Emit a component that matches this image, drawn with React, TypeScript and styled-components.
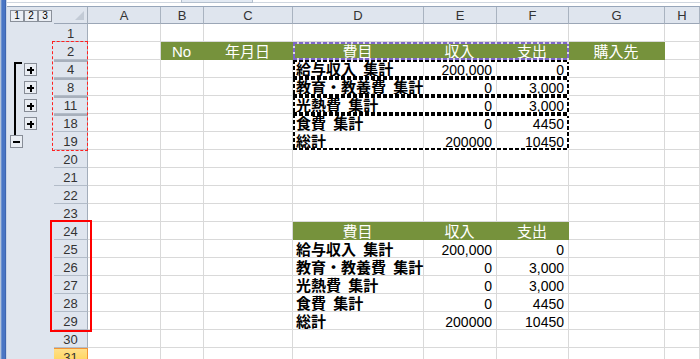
import React from 'react';
import styled, { createGlobalStyle } from 'styled-components';

const GlobalStyle = createGlobalStyle`
  html, body {
    margin: 0;
    padding: 0;
    background: #fff;
    overflow: hidden;
  }
  body {
    font-family: "Liberation Sans", "Noto Sans CJK JP", sans-serif;
  }
`;

const LETTERS = ['A', 'B', 'C', 'D', 'E', 'F', 'G', 'H'];
const colOf = (l: string) => 4 + LETTERS.indexOf(l);

type SheetRow = {
  n: number;
  hiddenAbove?: boolean;
  toggle?: 'plus' | 'minus';
  selected?: boolean;
  head?: Record<string, string>;
  data?: [string, string, string];
};

const firstHead = { B: 'No', C: '年月日', D: '費目', E: '収入', F: '支出', G: '購入先' };
const secondHead = { D: '費目', E: '収入', F: '支出' };

const totals: [string, string, string][] = [
  ['給与収入 集計', '200,000', '0'],
  ['教育・教養費 集計', '0', '3,000'],
  ['光熱費 集計', '0', '3,000'],
  ['食費 集計', '0', '4450'],
  ['総計', '200000', '10450'],
];

const rows: SheetRow[] = [
  { n: 1 },
  { n: 2, head: firstHead },
  { n: 4, hiddenAbove: true, toggle: 'plus', data: totals[0] },
  { n: 8, hiddenAbove: true, toggle: 'plus', data: totals[1] },
  { n: 11, hiddenAbove: true, toggle: 'plus', data: totals[2] },
  { n: 18, hiddenAbove: true, toggle: 'plus', data: totals[3] },
  { n: 19, toggle: 'minus', data: totals[4] },
  { n: 20 },
  { n: 21 },
  { n: 22 },
  { n: 23 },
  { n: 24, head: secondHead },
  { n: 25, data: totals[0] },
  { n: 26, data: totals[1] },
  { n: 27, data: totals[2] },
  { n: 28, data: totals[3] },
  { n: 29, data: totals[4] },
  { n: 30 },
  { n: 31, selected: true },
];

// grid row of a sheet row: strip + column header come first
const gr = (i: number) => i + 3;

const Sheet = styled.div`
  display: grid;
  grid-template-columns: 7px 47px 34px 73px 43px 89px 131px 73px 72px 96px 1fr;
  grid-template-rows: 7px 17px repeat(19, 18px);
  width: 700px;
  height: 359px;
  overflow: hidden;
  position: relative;
`;

const BlueStrip = styled.div`
  grid-column: 1;
  grid-row: 1 / -1;
  background: linear-gradient(
    to right,
    #b3c3da 0 1px,
    #6d92cf 1px 2px,
    #4a76c4 2px 5px,
    #3f66b0 5px 6px,
    #c9d5e6 6px
  );
`;

const TopStrip = styled.div`
  grid-column: 2 / -1;
  grid-row: 1;
  display: flex;
  background: linear-gradient(#fff 0 2px, #cfd6df 2px 3px, #fff 3px 6px, #97a6ba 6px);
`;

const NameTab = styled.div`
  margin-left: 174px;
  width: 70px;
  height: 2px;
  background: #e3eaf3;
  border: 1px solid #b3bfcd;
  border-top: none;
`;

const HeaderBase = styled.div`
  box-sizing: border-box;
  background: #dfe5ee;
  color: #333;
  font-size: 13px;
  display: flex;
  align-items: center;
  justify-content: center;
`;

const LevelCell = styled(HeaderBase)`
  grid-column: 2;
  grid-row: 2;
  justify-content: flex-start;
  padding-left: 3px;
`;

const LevelButton = styled.div`
  box-sizing: border-box;
  width: 14px;
  height: 12px;
  border: 1px solid #8a909a;
  background: #eaeef4;
  font-size: 10px;
  line-height: 10px;
  text-align: center;
  color: #000;
`;

const Corner = styled(HeaderBase)`
  grid-column: 3;
  grid-row: 2;
  position: relative;
  border-right: 1px solid #a3adba;
  border-bottom: 1px solid #9ba6b6;
  &::after {
    content: '';
    position: absolute;
    right: 3px;
    bottom: 3px;
    border-left: 9px solid transparent;
    border-bottom: 9px solid #c3cbd6;
  }
`;

const ColHeader = styled(HeaderBase)<{ $c: number }>`
  grid-column: ${p => p.$c};
  grid-row: 2;
  border-right: 1px solid #a9b3c0;
  border-bottom: 1px solid #9ba6b6;
  padding-top: 1px;
`;

const OutlineCell = styled.div<{ $r: number; $indent: number }>`
  grid-column: 2;
  grid-row: ${p => p.$r};
  background: #dfe5ee;
  display: flex;
  align-items: center;
  padding-left: ${p => p.$indent}px;
`;

const Toggle = styled.div<{ $plus: boolean }>`
  box-sizing: border-box;
  width: 13px;
  height: 13px;
  margin-top: ${p => (p.$plus ? 1 : 0)}px;
  border: 1px solid #878d97;
  background: #e9edf3;
  position: relative;
  &::before {
    content: '';
    position: absolute;
    left: 2px;
    top: 5px;
    width: 7px;
    height: 2px;
    background: #000;
  }
  &::after {
    content: '';
    display: ${p => (p.$plus ? 'block' : 'none')};
    position: absolute;
    left: 4.5px;
    top: 2.5px;
    width: 2px;
    height: 7px;
    background: #000;
  }
`;

const RowHeader = styled(HeaderBase)<{ $r: number; $hidden?: boolean; $selected?: boolean }>`
  grid-column: 3;
  grid-row: ${p => p.$r};
  border-right: 1px solid ${p => (p.$selected ? '#f29436' : '#a3adba')};
  border-bottom: 1px solid ${p => (p.$selected ? '#f29436' : '#b3bcc8')};
  border-top: ${p => (p.$selected ? '1px solid #f29436' : 'none')};
  background: ${p => (p.$selected ? 'linear-gradient(#ffe08a, #ffd24f)' : '#dfe5ee')};
  box-shadow: ${p => (p.$hidden ? 'inset 0 2px 0 #a8b0bc' : 'none')};
  font-size: 13px;
  padding-top: 1px;
`;

type CellKind = 'blank' | 'head' | 'label' | 'num';

const Cell = styled.div<{ $r: number; $c: number; $kind: CellKind }>`
  grid-column: ${p => p.$c};
  grid-row: ${p => p.$r};
  box-sizing: border-box;
  border-right: 1px solid ${p => (p.$kind === 'head' ? '#76923c' : '#d9d9d9')};
  border-bottom: 1px solid ${p => (p.$kind === 'head' ? '#76923c' : '#d9d9d9')};
  background: ${p => (p.$kind === 'head' ? '#76923c' : '#fff')};
  color: ${p => (p.$kind === 'head' ? '#fff' : '#000')};
  font-size: ${p => (p.$kind === 'num' ? 14 : 15)}px;
  font-weight: ${p => (p.$kind === 'label' ? 700 : 400)};
  text-align: ${p => (p.$kind === 'num' ? 'right' : p.$kind === 'head' ? 'center' : 'left')};
  word-spacing: 3px;
  line-height: 18px;
  padding: 1px 4px 0 3px;
  white-space: nowrap;
`;

// copy marquee ("marching ants") around a block of copied cells
const Ants = styled.div<{ $rows: string; $ink: string; $gap: string }>`
  grid-column: 7 / 10;
  grid-row: ${p => p.$rows};
  z-index: 2;
  pointer-events: none;
  background:
    repeating-linear-gradient(90deg, ${p => p.$ink} 0 4px, ${p => p.$gap} 4px 6px) top left / 100% 2px no-repeat,
    repeating-linear-gradient(90deg, ${p => p.$ink} 0 4px, ${p => p.$gap} 4px 6px) bottom left / 100% 2px no-repeat,
    repeating-linear-gradient(180deg, ${p => p.$ink} 0 4px, ${p => p.$gap} 4px 6px) top left / 2px 100% no-repeat,
    repeating-linear-gradient(180deg, ${p => p.$ink} 0 4px, ${p => p.$gap} 4px 6px) top right / 2px 100% no-repeat;
`;

const Bracket = styled.div`
  grid-column: 2;
  grid-row: ${gr(2)} / ${gr(6)};
  justify-self: start;
  width: 6px;
  margin: 2px 0 -3px 7px;
  border-left: 2px solid #000;
  border-top: 2px solid #000;
  z-index: 1;
`;

const CopyMark = styled.div`
  grid-column: 3;
  grid-row: ${gr(1)} / ${gr(7)};
  margin: -1px 0 -1px -2px;
  border: 1px dashed #ff2020;
  z-index: 3;
  pointer-events: none;
`;

const Highlight = styled.div`
  grid-column: 3;
  grid-row: ${gr(11)} / ${gr(17)};
  margin: -2px -4px;
  border: 2px solid #ff0000;
  z-index: 3;
  pointer-events: none;
`;

function renderCells(row: SheetRow, r: number) {
  return LETTERS.map(l => {
    const c = colOf(l);
    if (row.head && row.head[l] !== undefined) {
      return (
        <Cell key={l} $r={r} $c={c} $kind="head">
          {row.head[l]}
        </Cell>
      );
    }
    if (row.data && (l === 'D' || l === 'E' || l === 'F')) {
      const idx = l === 'D' ? 0 : l === 'E' ? 1 : 2;
      return (
        <Cell key={l} $r={r} $c={c} $kind={idx === 0 ? 'label' : 'num'}>
          {row.data[idx]}
        </Cell>
      );
    }
    return <Cell key={l} $r={r} $c={c} $kind="blank" />;
  });
}

export default function App() {
  return (
    <>
      <GlobalStyle />
      <Sheet>
        <BlueStrip />
        <TopStrip>
          <NameTab />
        </TopStrip>
        <LevelCell>
          {['1', '2', '3'].map(n => (
            <LevelButton key={n}>{n}</LevelButton>
          ))}
        </LevelCell>
        <Corner />
        {LETTERS.map(l => (
          <ColHeader key={l} $c={colOf(l)}>
            {l}
          </ColHeader>
        ))}

        {rows.map((row, i) => {
          const r = gr(i);
          return (
            <React.Fragment key={row.n}>
              <OutlineCell $r={r} $indent={row.toggle === 'minus' ? 3 : 17}>
                {row.toggle && <Toggle $plus={row.toggle === 'plus'} />}
              </OutlineCell>
              <RowHeader $r={r} $hidden={row.hiddenAbove} $selected={row.selected}>
                {row.n}
              </RowHeader>
              {renderCells(row, r)}
            </React.Fragment>
          );
        })}

        <Bracket />
        <Ants $rows={`${gr(1)}`} $ink="#7d66c8" $gap="#dcd6ee" />
        <Ants $rows={`${gr(2)}`} $ink="#000" $gap="#fff" />
        <Ants $rows={`${gr(3)}`} $ink="#000" $gap="#fff" />
        <Ants $rows={`${gr(4)}`} $ink="#000" $gap="#fff" />
        <Ants $rows={`${gr(5)} / ${gr(7)}`} $ink="#000" $gap="#fff" />
        <CopyMark />
        <Highlight />
      </Sheet>
    </>
  );
}
